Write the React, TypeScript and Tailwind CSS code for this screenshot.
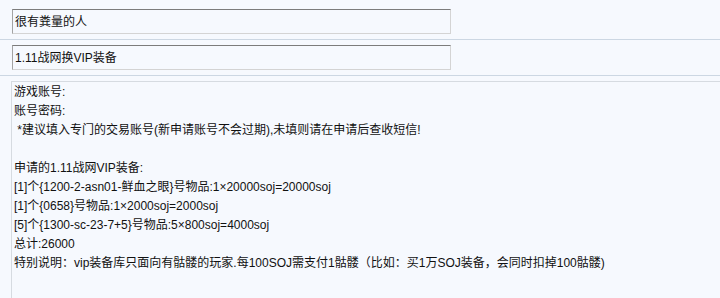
const font = 'font-["Liberation_Sans","Noto_Sans_CJK_SC",sans-serif]';

const lines = [
  '游戏账号:',
  '账号密码:',
  ' *建议填入专门的交易账号(新申请账号不会过期),未填则请在申请后查收短信!',
  '',
  '申请的1.11战网VIP装备:',
  '[1]个{1200-2-asn01-鲜血之眼}号物品:1×20000soj=20000soj',
  '[1]个{0658}号物品:1×2000soj=2000soj',
  '[5]个{1300-sc-23-7+5}号物品:5×800soj=4000soj',
  '总计:26000',
  '特别说明：vip装备库只面向有骷髅的玩家.每100SOJ需支付1骷髅（比如：买1万SOJ装备，会同时扣掉100骷髅)',
];

function Field({ value }: { value: string }) {
  return (
    <div className="flex h-[25px] w-[439px] items-center border border-t-[#7c7c7c] border-l-[#a3a3a3] border-r-[#d4d4d4] border-b-[#d4d4d4] bg-[#f6f9fe] pl-[2px] text-[12px] text-[#111]">
      {value}
    </div>
  );
}

export default function App() {
  return (
    <div className={`h-[298px] w-[720px] overflow-hidden bg-[#f6f9fe] ${font}`}>
      <div className="border-b border-[#ccd7e3] px-[12px] pt-[9px] pb-[5px]">
        <Field value="很有粪量的人" />
      </div>
      <div className="border-b border-[#ccd7e3] px-[12px] py-[5px]">
        <Field value="1.11战网换VIP装备" />
      </div>
      <div className="flex pt-[5px]">
        <div className="mt-[19px] mr-[9px] ml-[2px] h-[200px] w-px bg-[#dde1e6]" />
        <div className="h-[260px] w-[760px] shrink-0 border border-[#d6dbe1] px-[2px] pt-[1px] text-[12px] leading-[19px] whitespace-pre text-[#111]">
          {lines.map((l, i) => (
            <div key={i} className="h-[19px]">
              {l}
            </div>
          ))}
        </div>
      </div>
    </div>
  );
}
